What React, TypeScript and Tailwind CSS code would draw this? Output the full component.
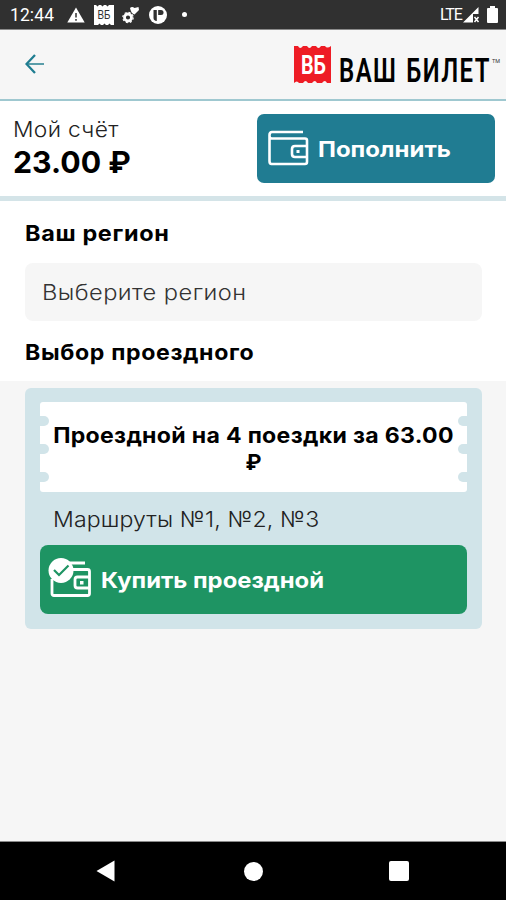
import React from 'react';

const tariffs = [
  { id: 1, title: 'Проездной на 4 поездки за 63.00', currency: '₽', routes: 'Маршруты №1, №2, №3' },
];

function StatusBar() {
  return (
    <div className="h-[30px] shrink-0 bg-[#303030] border-b border-[#8a8a8a] flex items-center justify-between pl-[10px] pr-[8px] text-white font-['Roboto',sans-serif]">
      <div className="flex items-center">
        <span className="w-[45px] text-[17.5px] leading-[30px] tracking-[0.1px]">12:44</span>
        <svg className="ml-[12px]" width="18" height="16" viewBox="0 0 18 16">
          <path d="M9 0.5 L17.7 15.5 H0.3 Z" fill="#fff" />
          <path d="M9 6 V10.5 M9 12 V13.7" stroke="#303030" strokeWidth="1.5" />
        </svg>
        <svg className="ml-[9px]" width="20" height="20" viewBox="0 0 20 20">
          <path d="M0 0 H2 L3.5 1.5 L5 0 H7 L8.5 1.5 L10 0 H12 L13.5 1.5 L15 0 H20 V20 H17 L15.5 18.5 L14 20 H12 L10.500 18.500 L9 20 H7 L5.500 18.500 L4 20 H0 Z" fill="#fff" />
          <text x="3.500" y="14" fontSize="12" textLength="13" lengthAdjust="spacingAndGlyphs" fill="#303030" fontFamily="Liberation Sans, sans-serif">ВБ</text>
        </svg>
        <svg className="ml-[8px]" width="18" height="18" viewBox="0 0 18 18">
          <circle cx="6" cy="11.500" r="3.500" fill="none" stroke="#fff" strokeWidth="2.800" />
          <circle cx="6" cy="11.500" r="5.200" fill="none" stroke="#fff" strokeWidth="1.200" strokeDasharray="2 2.080" />
          <path d="M8 2 Q10 0 12.500 2 L16.500 1 L17 4 L12.500 8.500 Q9 7.500 8 2 Z" fill="#fff" />
        </svg>
        <svg className="ml-[9px]" width="18" height="18" viewBox="0 0 18 18">
          <circle cx="9" cy="9" r="9" fill="#fff" />
          <path d="M4.500 4 H7.800 V15 Q4.500 14.500 4.500 12 Z" fill="#303030" />
          <path d="M9.200 4 H12 Q14.500 4 14.500 6.500 Q14.500 9 12 9 H9.200 Z" fill="#303030" />
        </svg>
        <span className="ml-[15px] w-[5px] h-[5px] rounded-full bg-white" />
      </div>
      <div className="flex items-center">
        <span className="w-[23px] text-[16px] leading-[30px] tracking-[-1.1px]">LTE</span>
        <svg width="17" height="16" viewBox="0 0 17 16">
          <path d="M15.500 0 V7 H10 V15.500 H0 Z" fill="#fff" />
          <path d="M11.500 10 L15.500 15 M15.500 10 L11.500 15" stroke="#fff" strokeWidth="1.500" />
        </svg>
        <svg className="ml-[7px]" width="11" height="17" viewBox="0 0 11 17">
          <path d="M3 0 H8 V2 H10 Q11 2 11 3 V16 Q11 17 10 17 H1 Q0 17 0 16 V3 Q0 2 1 2 H3 Z" fill="#fff" />
        </svg>
      </div>
    </div>
  );
}

function Logo() {
  return (
    <svg className="overflow-visible" width="208" height="50" viewBox="0 0 208 50" role="img" aria-label="Ваш билет">
      <path
        d="M0 1 H4 Q6 5 9 1 H13 Q15.500 5 18 1 H22 Q24.500 5 27 1 H31 Q33 4 37 1 V38 H33 Q31 34 28 38 H23 Q21 34 18 38 H14 Q11.500 34 9 38 H5 Q3 35 0 38 Z"
        fill="#ee1c25"
      />
      <text x="7" y="29" fontSize="26" fontWeight="700" textLength="25" lengthAdjust="spacingAndGlyphs" fill="#fff" fontFamily="Roboto, sans-serif">ВБ</text>
      <text x="45" y="37" fontSize="33" fontWeight="600" letterSpacing="2" wordSpacing="2" textLength="152" lengthAdjust="spacingAndGlyphs" fill="#000" fontFamily="Roboto, sans-serif">ВАШ БИЛЕТ</text>
      <text x="198" y="18" fontSize="6" textLength="8" lengthAdjust="spacingAndGlyphs" fill="#333" fontFamily="Roboto, sans-serif">TM</text>
    </svg>
  );
}

function WalletIcon() {
  return (
    <svg className="shrink-0 -mt-[2px]" width="44" height="40" viewBox="0 0 44 40" fill="none" stroke="#fff" strokeWidth="2.6">
      <path d="M38 4 H7 Q4.500 4 4.500 7 V33 Q4.500 36 6.500 36 H40 Q42 36 42 34 V12.500 Q42 10.500 40 10.500 H7 Q4.500 10.500 4.500 8" />
      <path d="M42 18 H30 Q27 18 27 21 V26 Q27 29 30 29 H42" />
      <rect x="31.500" y="22" width="3" height="3" fill="#fff" stroke="none" />
    </svg>
  );
}

function WalletCheckIcon() {
  return (
    <svg className="shrink-0 -mt-[2px] overflow-visible" width="44" height="40" viewBox="0 0 44 40" fill="none" stroke="#fff" strokeWidth="2.8">
      <path d="M20 4 H37 M24 10.500 H39.500 Q41.500 10.500 41.500 12.500 V34.500 Q41.500 36.500 39.500 36.500 H6 Q4 36.500 4 34.500 V20" />
      <path d="M41 18 H29.500 Q27 18 27 20.500 V26.500 Q27 29 29.500 29 H41" />
      <rect x="32" y="22" width="3.500" height="3.500" fill="#fff" stroke="none" />
      <circle cx="13" cy="11.500" r="12.500" fill="#fff" stroke="none" />
      <path d="M6 11 L11 16 L20.500 6.500" stroke="#1e9463" strokeWidth="2.200" />
    </svg>
  );
}

function Ticket({ title, currency }: { title: string; currency: string }) {
  return (
    <div className="h-[90px] bg-white rounded-[3px] flex justify-between">
      <div className="w-[9px] pt-[14px] pb-[10px] flex flex-col justify-between">
        <span className="w-[9px] h-[10px] rounded-r-full bg-[#d1e4e9]" />
        <span className="w-[9px] h-[10px] rounded-r-full bg-[#d1e4e9]" />
        <span className="w-[9px] h-[10px] rounded-r-full bg-[#d1e4e9]" />
      </div>
      <div className="pt-[20px] text-[21.5px] leading-[27px] font-bold text-center">
        <p className="w-[401px] flex justify-center whitespace-nowrap tracking-[0.3px] scale-x-[1.073]">{title}</p>
        <p>{currency}</p>
      </div>
      <div className="w-[9px] pt-[14px] pb-[10px] flex flex-col justify-between">
        <span className="w-[9px] h-[10px] rounded-l-full bg-[#d1e4e9]" />
        <span className="w-[9px] h-[10px] rounded-l-full bg-[#d1e4e9]" />
        <span className="w-[9px] h-[10px] rounded-l-full bg-[#d1e4e9]" />
      </div>
    </div>
  );
}

export default function App() {
  return (
    <div className="w-[506px] h-[900px] overflow-hidden flex flex-col bg-[#f6f6f6] text-black font-['Inter',sans-serif]">
      <StatusBar />

      <header className="h-[71px] shrink-0 border-b-2 border-[#9fc8d0] flex items-start justify-between pl-[25px] pr-1">
        <svg className="mt-[24px]" width="20" height="20" viewBox="0 0 20 20" fill="none" strokeWidth="2">
          <path d="M19 10 H1.500" stroke="#5a9da9" />
          <path d="M10 1 L1.500 10 L10 19" stroke="#1f7d91" strokeWidth="2.300" />
        </svg>
        <div className="mt-[15px]">
          <Logo />
        </div>
      </header>

      {/* Balance */}
      <section className="h-[100px] shrink-0 bg-white border-b-[5px] border-[#d4e4e8] flex justify-between pl-[13px] pr-[11px] pt-[13px]">
        <div>
          <p className="text-[21.5px] leading-[30px] font-light text-[#222] tracking-[0.3px] origin-left scale-x-[1.06]">Мой счёт</p>
          <p className="text-[30px] leading-[36px] font-bold origin-left scale-x-[1.01]">23.00 ₽</p>
        </div>
        <button className="w-[238px] h-[69px] rounded-[7px] bg-[#207c92] text-white flex items-center pl-[8px] gap-[9px]">
          <WalletIcon />
          <span className="text-[22px] font-bold origin-left scale-x-[1.09] pt-px">Пополнить</span>
        </button>
      </section>

      <section className="h-[180px] shrink-0 bg-white pl-[25px] pr-[24px]">
        <h2 className="pt-[17px] text-[21.5px] leading-[30px] font-bold tracking-[0.6px] origin-left scale-x-[1.09]">Ваш регион</h2>
        <div className="mt-[15px] h-[58px] rounded-[8px] bg-[#f6f6f6] flex items-center pl-[17px] text-[22px] font-light text-[#333]">
          <span className="tracking-[0.4px] origin-left scale-x-[1.075]">Выберите регион</span>
        </div>
        <h2 className="pt-[16px] text-[21.5px] leading-[30px] font-bold tracking-[0.6px] origin-left scale-x-[1.075]">Выбор проездного</h2>
      </section>

      <main className="grow pr-[24px] pt-[7px] pl-[25px]">
        {tariffs.map((t) => (
          <div key={t.id} className="h-[241px] rounded-[6px] bg-[#d1e4e9] px-[15px] pt-[14px]">
            <Ticket title={t.title} currency={t.currency} />
            <p className="ml-[13px] pt-[12px] text-[22px] leading-[30px] font-light text-[#222] tracking-[0.1px] origin-left scale-x-[1.05]">{t.routes}</p>
            <button className="mt-[11px] w-full h-[69px] rounded-[8px] bg-[#1e9463] text-white flex items-center pl-[8px] gap-[9px]">
              <WalletCheckIcon />
              <span className="text-[22px] font-bold origin-left scale-x-[1.083] pt-px">Купить проездной</span>
            </button>
          </div>
        ))}
      </main>

      <nav className="h-[59px] shrink-0 bg-black border-t border-[#8a8a8a] flex items-center pl-[96px]">
        <svg width="19" height="22" viewBox="0 0 19 22">
          <path d="M18.500 0.500 V21.500 L0.500 11 Z" fill="#fff" />
        </svg>
        <span className="ml-[129px] w-[19px] h-[19px] rounded-full bg-white" />
        <span className="ml-[126px] w-[20px] h-[20px] rounded-[2px] bg-white" />
      </nav>
    </div>
  );
}
